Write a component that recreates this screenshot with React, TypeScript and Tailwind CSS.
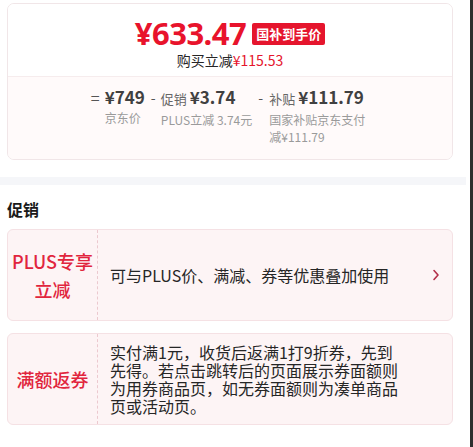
import React from "react";

const FONT = { fontFamily: '"Noto Sans CJK SC", "Noto Sans", sans-serif' };

function Chevron() {
  return (
    <svg width="8" height="12" viewBox="0 0 8 12" fill="none">
      <path d="M2 1.5L6 6L2 10.5" stroke="#b3304a" strokeWidth="1.6" strokeLinecap="round" strokeLinejoin="round" />
    </svg>
  );
}

function PriceCard() {
  return (
    <div className="overflow-hidden rounded-[7px] border border-[#f1e6e8]">
      {/* headline */}
      <div className="flex flex-col items-center bg-white pt-[12px] pb-[6px]">
        <div className="flex h-[34px] items-center gap-[6px]">
          <span
            className="text-[31px] leading-[34px] font-bold tracking-[-0.5px] text-[#e8132c]"
            style={{ fontFamily: '"Noto Sans", sans-serif' }}
          >
            ¥633.47
          </span>
          <span className="mt-[2px] rounded-[2px] bg-[#e5152d] px-[4px] text-[13px] leading-[22px] font-bold text-white">
            国补到手价
          </span>
        </div>
        <div className="text-[14px] leading-[20px] text-[#262626]">
          购买立减<span className="text-[#e5152d]">¥115.53</span>
        </div>
      </div>
      {/* breakdown */}
      <div className="flex justify-center border-t border-[#f6eced] bg-[#fffafa] pt-[9px] pb-[14px]">
        <div className="flex items-start gap-[6px]">
          <div className="flex items-start">
            <span className="w-[14px] text-[16px] leading-[22px] text-[#555]">=</span>
            <div className="flex flex-col">
              <span className="text-[17px] leading-[22px] font-semibold text-[#404040]">¥749</span>
              <span className="mt-[1px] text-[12px] leading-[17px] text-[#9a9a9a]">京东价</span>
            </div>
          </div>
          <div className="flex items-start">
            <span className="w-[10px] text-[14px] leading-[22px] text-[#555]">-</span>
            <div className="flex flex-col">
              <span className="leading-[22px]">
                <span className="text-[13px] text-[#666]">促销 </span>
                <span className="text-[17px] font-semibold text-[#404040]">¥3.74</span>
              </span>
              <span className="mt-[1px] text-[12px] leading-[17px] text-[#9a9a9a]">PLUS立减 3.74元</span>
            </div>
          </div>
          <div className="flex items-start">
            <span className="w-[11px] text-[14px] leading-[22px] text-[#555]">-</span>
            <div className="flex w-[100px] flex-col">
              <span className="leading-[22px] whitespace-nowrap">
                <span className="text-[13px] text-[#666]">补贴 </span>
                <span className="text-[17px] font-semibold text-[#404040]">¥111.79</span>
              </span>
              <span className="mt-[1px] text-[12px] leading-[17px] text-[#9a9a9a]">国家补贴京东支付减¥111.79</span>
            </div>
          </div>
        </div>
      </div>
    </div>
  );
}

function PromoCard({ label, text, arrow }: { label: React.ReactNode; text: string; arrow?: boolean }) {
  return (
    <div className="flex min-h-[92px] rounded-[6px] border border-[#f5e1e4] bg-[#fdf4f5]">
      <div className="flex w-[90px] shrink-0 items-center justify-center border-r border-dashed border-[#ecc9cf] text-center text-[18px] leading-[28px] font-medium text-[#e1253d]">
        {label}
      </div>
      <div className="flex flex-1 items-center">
        <p className="w-[300px] pl-[12px] text-[16px] leading-[18px] text-[#262626]">{text}</p>
        <div className="flex flex-1 justify-end pr-[12px]">{arrow && <Chevron />}</div>
      </div>
    </div>
  );
}

export default function App() {
  return (
    <div className="flex h-[447px] w-[473px] bg-white" style={FONT}>
      <div className="w-[466px] shrink-0">
        <div className="pt-[3px] pl-[7px] pr-[13px]">
          <PriceCard />
        </div>
        <div className="mt-[17px] h-[8px] bg-[#f5f6f9]" />
        <div className="pl-[7px] pr-[13px]">
          <h2 className="mt-[12px] text-[16px] leading-[24px] font-bold text-[#1a1a1a]">促销</h2>
          <div className="mt-[8px] flex flex-col gap-[12px]">
            <PromoCard
              label={
                <>
                  PLUS专享
                  <br />
                  立减
                </>
              }
              text="可与PLUS价、满减、券等优惠叠加使用"
              arrow
            />
            <PromoCard
              label="满额返券"
              text="实付满1元，收货后返满1打9折券，先到先得。若点击跳转后的页面展示券面额则为用券商品页，如无券面额则为凑单商品页或活动页。"
            />
          </div>
        </div>
      </div>
      <div className="flex-1" />
      <div className="h-full w-[3px] bg-[#2e2e2e]" />
    </div>
  );
}
